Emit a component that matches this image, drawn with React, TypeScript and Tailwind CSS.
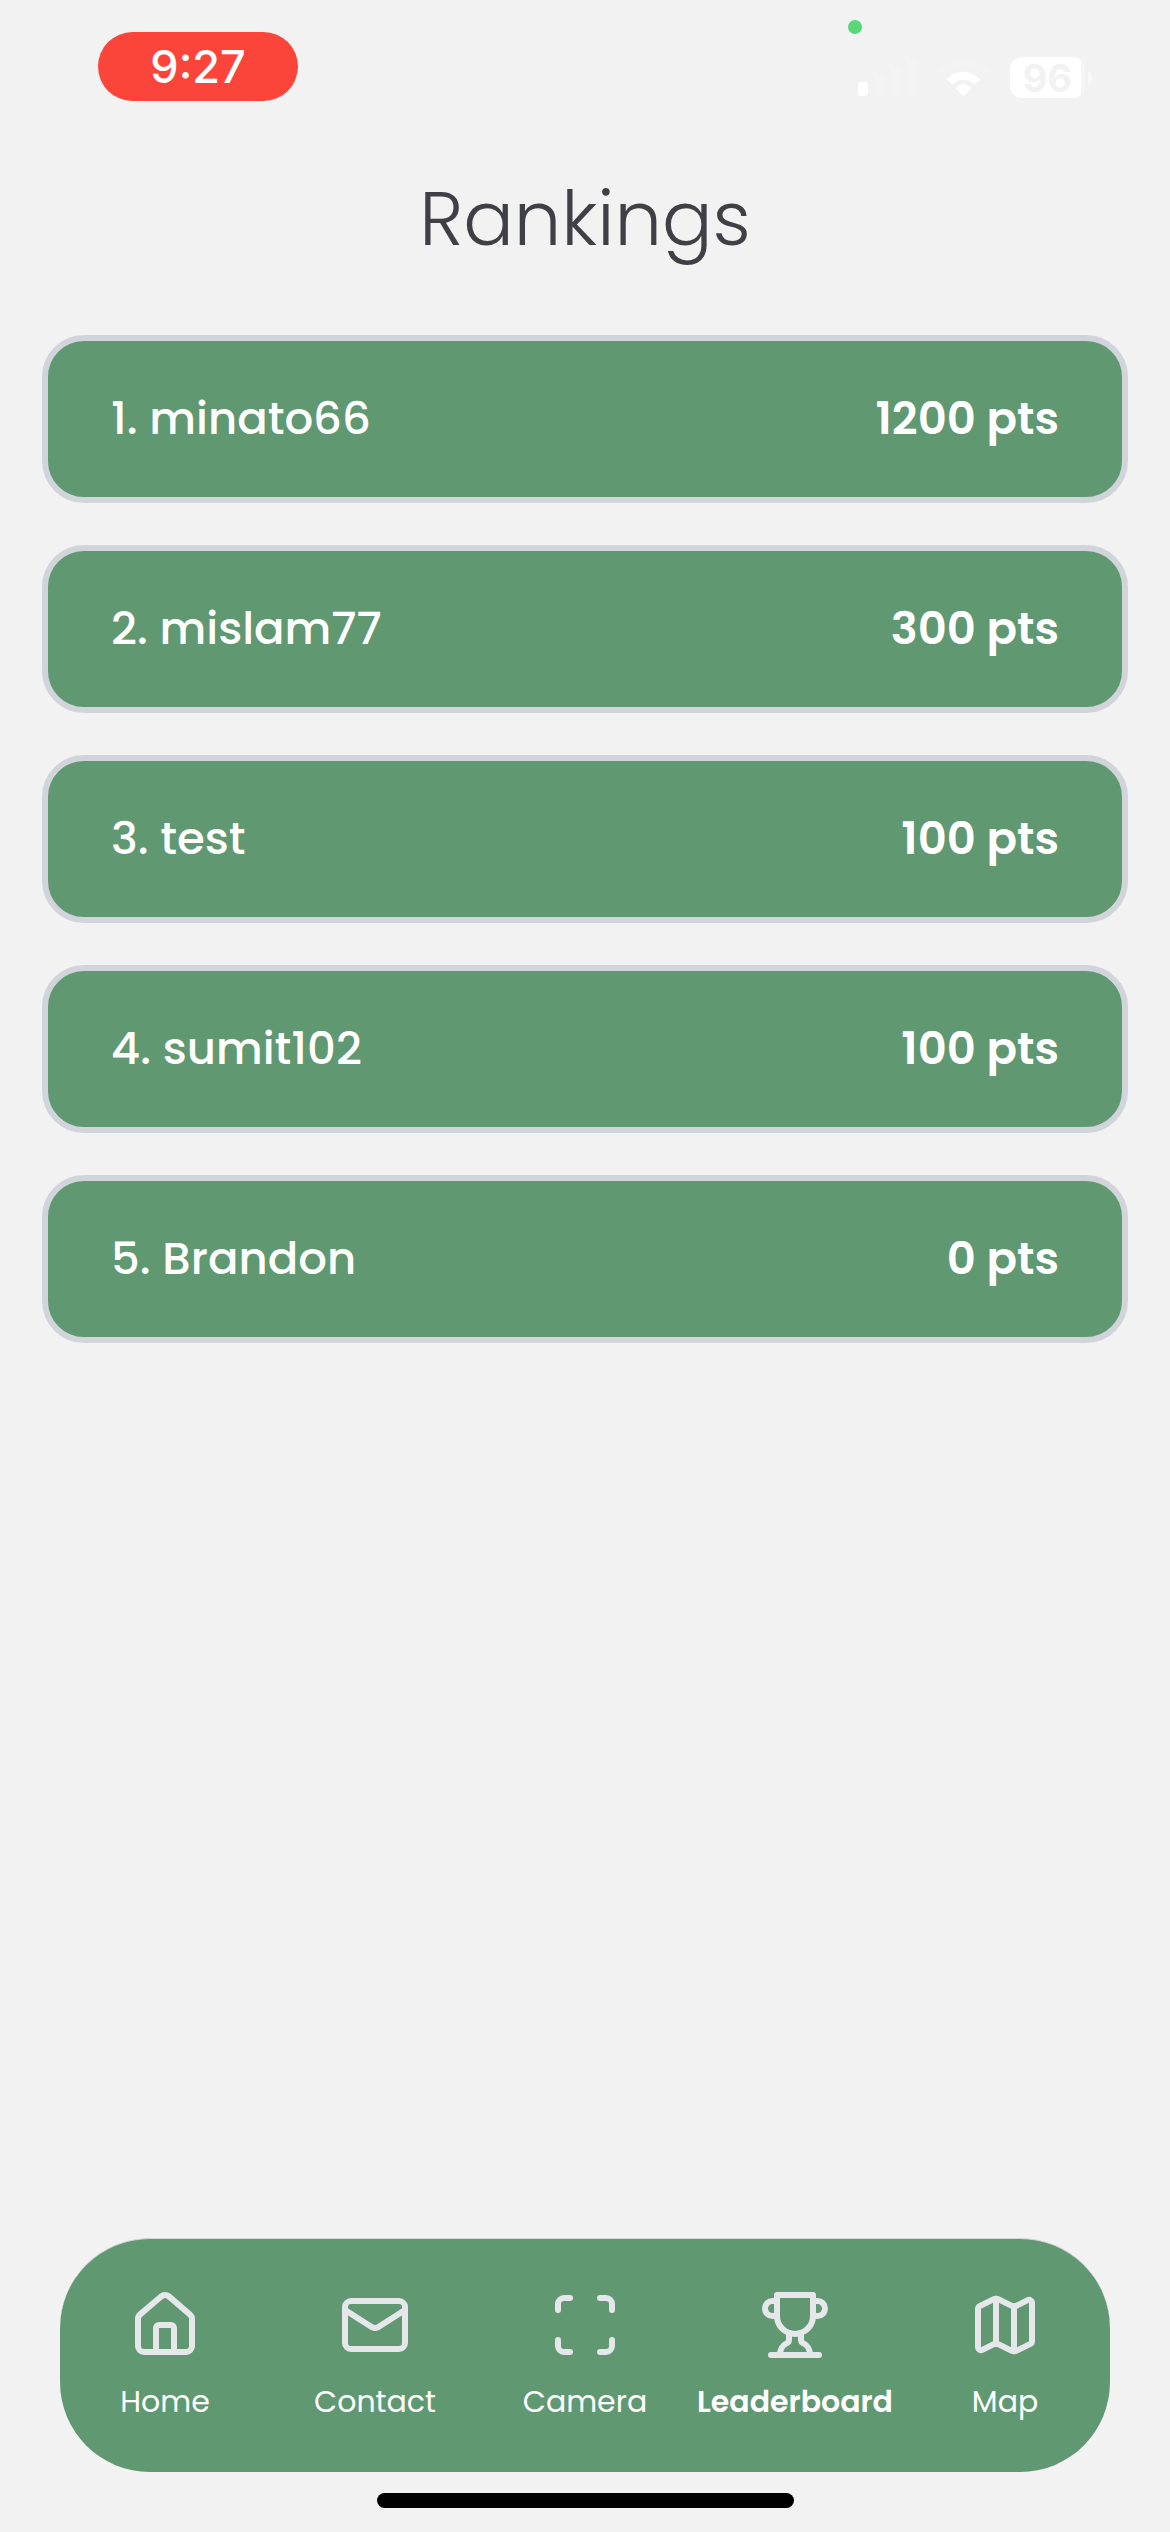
import { House, Mail, Scan, Map as MapIcon } from 'lucide-react';

const rankings = [
  { name: 'minato66', points: 1200 },
  { name: 'mislam77', points: 300 },
  { name: 'test', points: 100 },
  { name: 'sumit102', points: 100 },
  { name: 'Brandon', points: 0 },
];

const tabs = [
  { label: 'Home', href: '#home', icon: House },
  { label: 'Contact', href: '#contact', icon: Mail },
  { label: 'Camera', href: '#camera', icon: Scan },
  { label: 'Leaderboard', href: '#leaderboard', icon: TrophyCup, active: true },
  { label: 'Map', href: '#map', icon: MapIcon },
];

export default function App() {
  return (
    <div className="flex min-h-screen w-full flex-col bg-[#f2f2f2] font-['Poppins','Inter',sans-serif]">
      <StatusBar />

      {/* Rankings */}
      <main className="flex flex-1 flex-col px-[42px]">
        <h1 className="mt-[58px] text-center text-[75px] leading-[120px] font-light text-[#3f3f46]">Rankings</h1>
        <ol className="mt-[56px] flex flex-col gap-[42px]">
          {rankings.map((player, i) => (
            <li
              key={player.name}
              className="flex h-[168px] items-center justify-between rounded-[42px] border-[6px] border-[#d1d5db] bg-[#609871] px-[63px] text-[45px] text-white"
            >
              <span className="font-medium">{i + 1}. {player.name}</span>
              <span className="font-semibold">{player.points} pts</span>
            </li>
          ))}
        </ol>
      </main>

      {/* Bottom tabs */}
      <nav className="mx-[60px] flex h-[234px] rounded-[90px] border-t border-[#d4d6d5] bg-[#609871] pt-[50px]">
        {tabs.map(({ label, href, icon: Icon, active }) => (
          <a key={label} href={href} className="flex flex-1 basis-0 flex-col items-center gap-5 text-white">
            <Icon className="size-[72px] text-[#e5e7eb]" strokeWidth={2} />
            <span className={`text-[30px] leading-[42px] ${active ? 'font-semibold' : 'font-normal'}`}>{label}</span>
          </a>
        ))}
      </nav>

      <div className="mx-auto mt-[21px] mb-6 h-[15px] w-[417px] rounded-full bg-black" />
    </div>
  );
}

function StatusBar() {
  return (
    <header className="relative flex items-start justify-between pt-8 pr-[78px] pl-[98px] font-['Inter',sans-serif]">
      <div className="flex h-[69px] w-[200px] items-center justify-center rounded-full bg-[#fc453a] text-[45px] font-medium text-white">
        9:27
      </div>

      {/* Camera in use */}
      <span className="absolute top-5 right-[308px] size-3.5 rounded-full bg-[#5ad77a]" />

      <div className="flex items-center pt-[25px]">
        <svg className="mr-[23px] h-[37px] w-[58px]" viewBox="0 0 58 37" fill="#f4f4f4">
          <rect x="0" y="23" width="10" height="14" rx="3" fill="#ffffff" />
          <rect x="16" y="16" width="10" height="21" rx="3" />
          <rect x="32" y="8" width="10" height="29" rx="3" />
          <rect x="48" y="0" width="10" height="37" rx="3" />
        </svg>
        <svg className="mr-[22px] h-[37px] w-[49px]" viewBox="0 0 49 37" fill="#ffffff">
          <path d="M1 9.500C14-3 35-3 48 9.500c1 1 1 2 0 3l-2 2c-1 1-2 1-3 0-10.500-9-26.500-9-37 0-1 1-2 1-3 0l-2-2c-1-1-1-2 0-3Z" fill="#f4f4f4" />
          <path d="M8.500 19.500c9-9 23-9 32 0 .7.700.7 1.200 0 1.900l-3.700 3.400c-.7.600-1.200.600-1.900 0-6-5.500-14.800-5.500-20.800 0-.7.600-1.200.600-1.900 0l-3.700-3.400c-.7-.7-.7-1.200 0-1.900Z" />
          <path d="M17.300 28.200c4-4 10.400-4 14.400 0 .6.600.6 1.100 0 1.700l-6.200 6.300c-.7.700-1.300.700-2 0l-6.200-6.300c-.6-.6-.6-1.100 0-1.700Z" />
        </svg>
        <div className="flex items-center gap-[3px]">
          <div className="flex h-[41px] w-[75px] items-center justify-center rounded-[12px] bg-linear-to-r from-white from-95% to-[#f6f6f6] to-95% text-[38px] leading-none font-bold text-[#f2f2f2]">
            96
          </div>
          <div className="h-3 w-1 rounded-r-full bg-[#f8f8f8]" />
        </div>
      </div>
    </header>
  );
}

function TrophyCup(props: React.SVGProps<SVGSVGElement>) {
  return (
    <svg viewBox="0 0 24 24" fill="none" stroke="currentColor" strokeLinecap="round" strokeLinejoin="round" {...props}>
      <path d="M6 9H4.500a2.500 2.500 0 0 1 0-5H6" />
      <path d="M18 9h1.500a2.500 2.500 0 0 0 0-5H18" />
      <path d="M4 22h16" />
      <path d="M10 14.660V17c0 .55-.47.98-.97 1.210C7.850 18.750 7 20.240 7 22" />
      <path d="M14 14.660V17c0 .55.47.98.97 1.210C16.150 18.750 17 20.240 17 22" />
      <path d="M18 2H6v7a6 6 0 0 0 12 0V2Z" />
    </svg>
  );
}
